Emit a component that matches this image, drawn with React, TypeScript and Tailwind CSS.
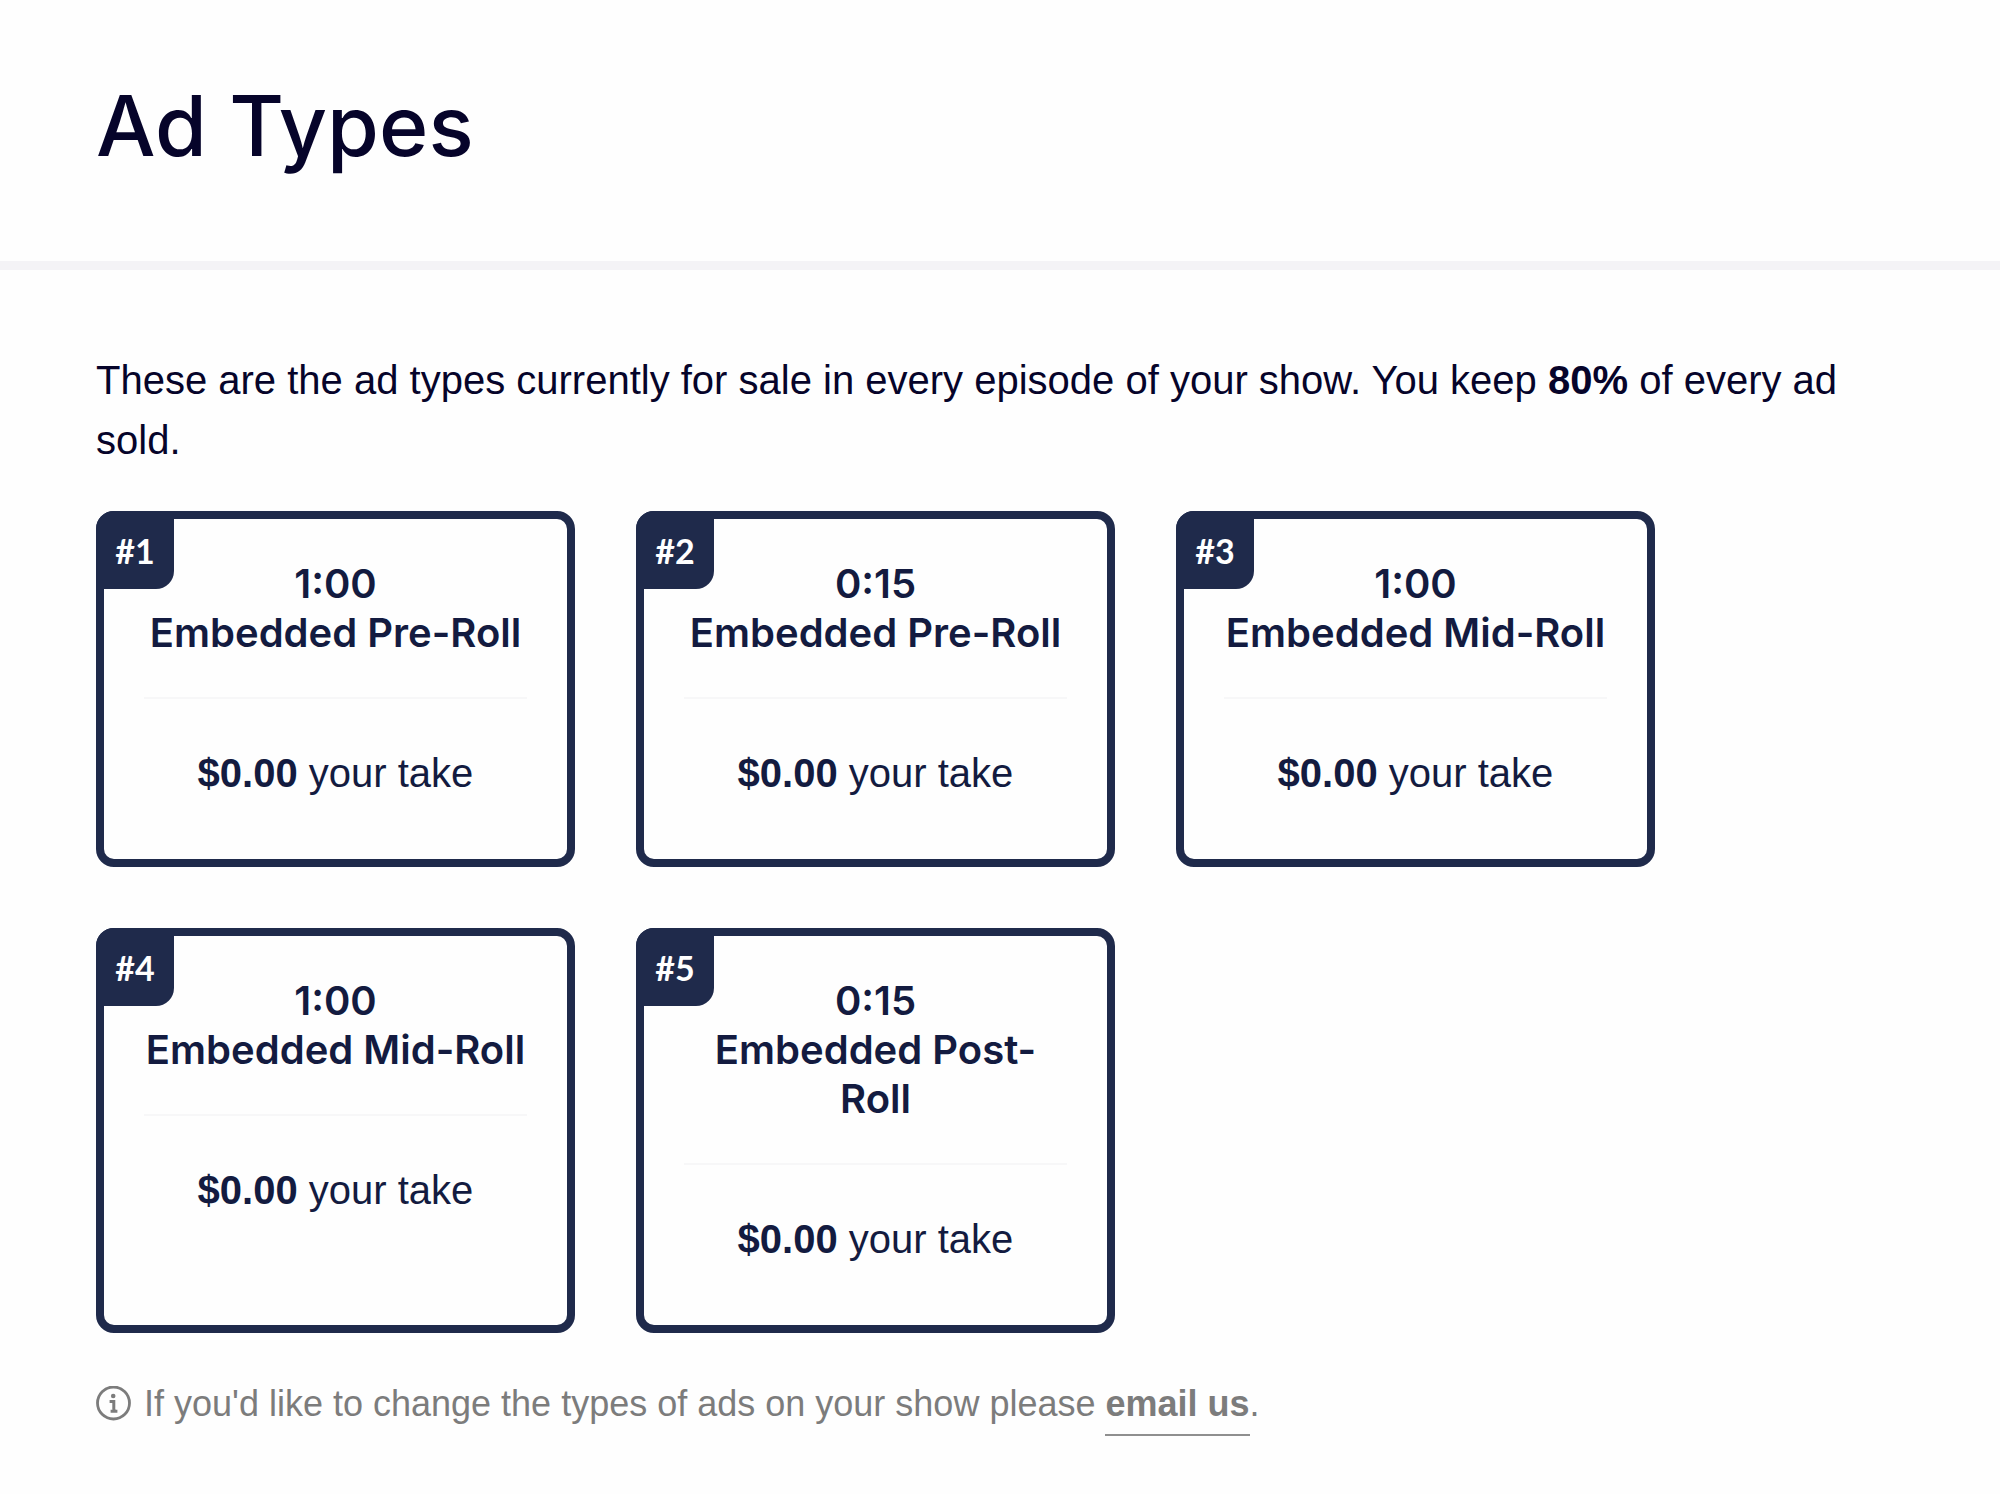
type AdType = { id: number; duration: string; name: string; take: string };

const adTypes: AdType[] = [
  { id: 1, duration: "1:00", name: "Embedded Pre-Roll", take: "$0.00" },
  { id: 2, duration: "0:15", name: "Embedded Pre-Roll", take: "$0.00" },
  { id: 3, duration: "1:00", name: "Embedded Mid-Roll", take: "$0.00" },
  { id: 4, duration: "1:00", name: "Embedded Mid-Roll", take: "$0.00" },
  { id: 5, duration: "0:15", name: "Embedded Post-Roll", take: "$0.00" },
];

function InfoIcon() {
  return (
    <svg viewBox="0 0 36 36" className="size-9 shrink-0" fill="none" aria-hidden="true">
      <circle cx="17.5" cy="17" r="16" stroke="currentColor" strokeWidth="2.8" />
      <circle cx="17.2" cy="10" r="2.3" fill="currentColor" />
      <path d="M13.6 15.6h4.2v7.4q0 2.2 2.2 2.2h1.4M14.6 25.2h6.8" stroke="currentColor" strokeWidth="3" />
    </svg>
  );
}

function AdTypeCard({ ad }: { ad: AdType }) {
  return (
    <li className="relative w-[479px] rounded-[18px] border-8 border-[#1f2a4b] px-10 pt-10 pb-14 text-center text-[#131b40]">
      <span className="absolute -top-2 -left-2 flex size-[78px] items-center justify-center rounded-tl-[18px] rounded-br-[18px] bg-[#1f2a4b] font-[Lato,sans-serif] text-[34px] font-bold text-white">
        #{ad.id}
      </span>
      <h2 className="border-b-2 border-[#f7f7f8] pb-10 font-[Inter,sans-serif] text-[40px] leading-[49px] font-semibold">
        <span className="block">{ad.duration}</span>
        {ad.name}
      </h2>
      <p className="mt-11 text-[40px] leading-[60px]">
        <strong className="font-bold">{ad.take}</strong> your take
      </p>
    </li>
  );
}

export default function App() {
  return (
    <div className="min-h-screen bg-[#fefefe] font-['Liberation_Sans',Arial,sans-serif] text-[#06042a]">
      <header className="border-b-[9px] border-[#f4f3f6] px-24 pt-[72px] pb-[81px]">
        <h1 className="font-[Inter,sans-serif] text-[84px] leading-[108px] font-medium">Ad Types</h1>
      </header>
      <main className="px-24 pt-20">
        <p className="text-[40px] leading-[60px]">
          These are the ad types currently for sale in every episode of your show. You keep{" "}
          <strong className="font-bold">80%</strong> of every ad sold.
        </p>
        <ul className="mt-[41px] flex flex-wrap gap-[61px]">
          {adTypes.map((ad) => (
            <AdTypeCard key={ad.id} ad={ad} />
          ))}
        </ul>
        <p className="mt-11 flex items-center gap-3 text-[36px] leading-[54px] text-[#7c7c7c]">
          <InfoIcon />
          <span>
            If you'd like to change the types of ads on your show please{" "}
            <a href="#email" className="border-b-2 border-[#8f8f8f] pb-2.5 font-bold">
              email us
            </a>
            .
          </span>
        </p>
      </main>
    </div>
  );
}
